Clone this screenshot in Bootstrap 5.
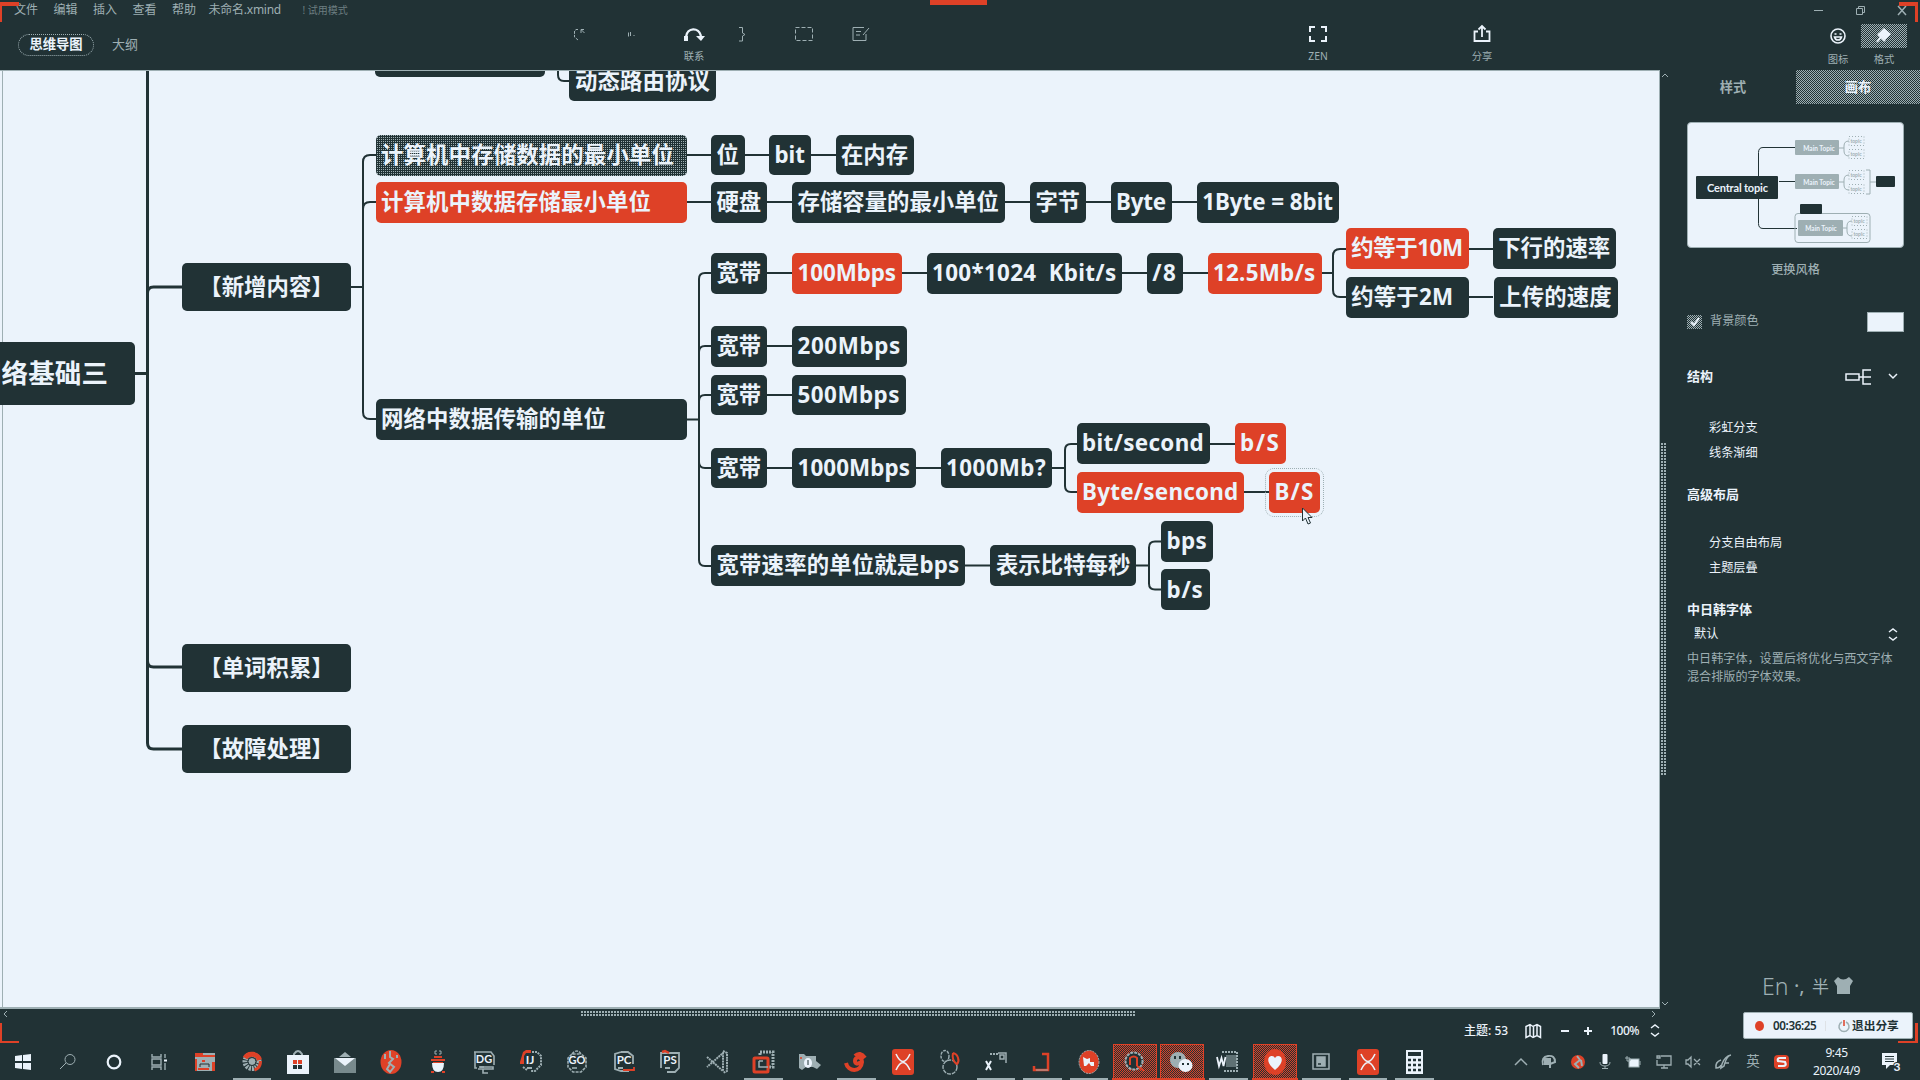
<!DOCTYPE html>
<html lang="zh-CN">
<head>
<meta charset="utf-8">
<title>未命名.xmind</title>
<link href="https://cdn.jsdelivr.net/npm/bootstrap@5.3.0/dist/css/bootstrap.min.css" rel="stylesheet">
<style>
:root{--ink:#213235;--paper:#ebf3fb;--mist:#9eafb3;--hot:#de4127}
body{width:1920px;height:1080px;background:var(--ink);color:var(--paper);font-family:"Noto Sans","Noto Sans CJK SC",sans-serif;font-size:12px;line-height:1}
svg{display:block;overflow:visible}
svg:not([fill]){fill:none}
svg:not([stroke]){stroke:currentColor}
.mist{color:var(--mist)}
.hot{color:var(--hot)}
.checker{background:repeating-conic-gradient(var(--mist) 0 25%,var(--ink) 0 50%) 0 0/2px 2px}
.checker-hot{background:repeating-conic-gradient(var(--hot) 0 25%,var(--ink) 0 50%) 0 0/2px 2px;border:1px solid var(--hot)}
.dots{background:linear-gradient(var(--ink) 1px,transparent 1px) 0 0/3px 3px,linear-gradient(90deg,var(--ink) 1px,transparent 1px) 0 0/3px 3px,var(--mist)}
.app-head{height:70px}
.menu-row{height:20px;padding-left:14px;padding-top:0}
.menu-list{gap:15.5px}
.doc-name{font-size:12px;margin-left:-3px;letter-spacing:-.25px}
.trial{font-size:10px;opacity:.6;margin-left:6px}
.win-btns{gap:33px;padding-right:14px}
.tool-row{height:50px;display:grid;grid-template-columns:18px 76px 18px 26px 418px 45px 62px 62px 36px 86px 28px 420px 46px 119px 44px 311px 46px 46px;justify-items:center;align-items:start}
.tool-row>*{white-space:nowrap}
.view-pill{width:76px;height:22px;margin-top:14px;border:1px dotted var(--mist);border-radius:11px;font-size:13.3px;font-weight:700}
.outline-link{font-size:13px;margin-top:18px}
.tool{display:flex;flex-direction:column;align-items:center;padding-top:5px;font-size:10.3px;color:var(--mist)}
.tool svg{height:18px;margin-bottom:8px}
.tool.right-tool{padding-top:4px}
.tool.right-tool .pic{width:46px;height:24px;display:flex;align-items:center;justify-content:center;margin-bottom:6px}
.right-tool svg{margin:0}
.work{height:973px}
.left-col{width:1660px}
.board{height:939px;background:var(--paper);border-top:1px solid var(--mist);border-right:1px solid var(--mist);border-bottom:2px solid var(--mist)}
.board .edge{left:2px;width:1px;top:0;bottom:0;background:var(--mist)}
.links{left:0;top:-1px;color:var(--ink);stroke-width:2}
.topic{position:absolute;background:var(--ink);color:var(--paper);border-radius:5px;font-weight:700;font-size:22.4px;white-space:nowrap;display:flex;align-items:center;padding-left:5.5px}
.topic.red{background:var(--hot)}
.topic.woven{background:conic-gradient(var(--mist) 0 25%,var(--ink) 0) 0 0/2px 2px}
.topic.main-t{justify-content:center;padding:0}
.topic.root{font-size:26.5px;padding-left:5px}
.topic.picked{outline:1px dotted var(--mist);outline-offset:3px}
.status{height:34px}
.status .thumb{width:555px;height:7px;margin-left:575px}
.status .info{padding-right:1px;font-size:12px;font-weight:500}
.side{width:260px}
.v-scroll{width:9px}
.v-scroll .thumb{height:334px;width:7px;border-radius:4px 4px 0 0}
.tabs{height:34px;margin-left:-9px}
.tabs>*{font-size:13.2px;font-weight:700;display:flex;align-items:center;justify-content:center;padding-top:2px}
.tabs .t-style{width:136px;padding-left:10px}
.tabs .t-canvas{width:124px}
.panel{width:217px;margin-left:18px}
.preview{margin-top:18px;height:126px;background:var(--paper);border-radius:4px;border:1px solid var(--mist)}
.preview text,.glyph{font-family:Lato,"Liberation Sans",sans-serif;font-weight:700;stroke:none;text-anchor:middle}
.line{display:flex;align-items:center;white-space:nowrap;font-size:12.2px;padding-top:1px}
.line.head{font-size:13px;font-weight:700}
.opt{height:25px;margin-left:-2px}
.ticked{width:15px;height:14px}
.swatch{width:37px;height:20px;background:var(--paper);border:1px solid var(--mist)}
.note{font-size:12.1px;line-height:18px}
.task{height:37px}
.task>.sys{width:45.5px}
.task>.app{width:46.5px}
.app,.sys{height:37px;display:flex;align-items:center;justify-content:center;flex:none}
.open::after{content:"";position:absolute;left:4px;right:4px;bottom:0;height:2px;background:var(--mist)}
.open,.lit{position:relative}
.lit .bg-tile{width:44px;height:35px;display:flex;align-items:center;justify-content:center}
.lit::after{content:"";position:absolute;left:0;right:0;bottom:0;height:2px;background:var(--hot)}
.tray{margin-left:77px;width:276px}
.clock{width:56px;margin-left:18px;gap:6px;font-size:12px;letter-spacing:-.4px;white-space:nowrap}
.recorder{left:1743px;top:1012px;width:170px;height:27px;background:var(--paper);color:var(--ink);border:1px solid var(--mist);font-size:11.7px;font-weight:600;border-radius:2px}
.ime{left:1762px;top:972px;height:28px}
.corner{width:19px;height:20px;border:0 solid var(--hot)}
</style>
<script src="https://cdn.jsdelivr.net/npm/bootstrap@5.3.0/dist/js/bootstrap.bundle.min.js"></script>
</head>
<body class="m-0 overflow-hidden position-relative">
<header class="app-head">
  <div class="menu-row d-flex align-items-center justify-content-between mist">
    <div class="menu-list d-flex align-items-center text-nowrap"><span>文件</span><span>编辑</span><span>插入</span><span>查看</span><span>帮助</span><span class="doc-name">未命名.xmind</span><span class="trial">! 试用模式</span></div>
    <div class="win-btns d-flex align-items-center">
      <svg width="9" height="9"><path d="M0 4.500H9"/></svg>
      <svg width="9" height="9"><path d="M.5 2.500h6v6h-6zM2.500 2V.5h6v6H7"/></svg>
      <svg width="8" height="9"><path d="M0 0l8 9M8 0L0 9" stroke-width="1.500"/></svg>
    </div>
  </div>
  <div class="tool-row">
    <i></i><div class="view-pill d-flex align-items-center justify-content-center">思维导图</div><i></i><div class="outline-link mist">大纲</div><i></i>
    <div class="tool"><svg width="12" viewBox="0 0 12 18"><path d="M5 4.500H3L1.500 6v6L5 15" stroke-dasharray="3 1"/><path d="M8 8V4.500h3M8.500 5l3 3"/></svg></div>
    <div class="tool"><svg width="12" viewBox="0 0 12 18"><path d="M2.500 7.500v4M4.500 7v4M7.500 10.500h1"/></svg></div>
    <div class="tool"><svg width="22" viewBox="0 0 22 18" color="#ebf3fb"><path d="M3 12C4 2 16 2 18 11" stroke-width="2.400"/><path d="M1 11h4v5H1zM13 11h9l-4 5z" fill="currentColor" stroke="none"/></svg><span>联系</span></div>
    <div class="tool"><svg width="8" viewBox="0 0 8 18"><path d="M0 2.500h3.500V8L6 9.500 3.500 11v5H0"/></svg></div>
    <div class="tool"><svg width="18" viewBox="0 0 18 18"><path d="M.5 2.500h17v13H.5z" stroke-dasharray="4 2"/></svg></div>
    <div class="tool"><svg width="18" viewBox="0 0 18 18"><path d="M12 2.500H1v13h13V9M17 3l-6 7M4 6.500h5M4 10h4"/></svg></div>
    <i></i>
    <div class="tool"><svg width="18" viewBox="0 0 18 18" color="#ebf3fb" stroke-width="2"><path d="M1 7V2h5M12 2h5v5M17 11v5h-5M6 16H1v-5"/></svg><span>ZEN</span></div>
    <i></i>
    <div class="tool"><svg width="18" viewBox="0 0 18 18" color="#ebf3fb" stroke-width="1.800"><path d="M5 6.500H1.500V16h15V6.500H13M9 12V1M5.500 4.500L9 1l3.500 3.500"/></svg><span>分享</span></div>
    <i></i>
    <div class="tool right-tool"><div class="pic"><svg width="16" height="16" style="height:16px" viewBox="0 0 16 16" color="#ebf3fb" stroke-width="1.600"><circle cx="8" cy="8" r="7"/><path d="M4.500 6h2M9.500 6h2M4.500 9h7c-1 4-6 4-7 0z"/></svg></div><span>图标</span></div>
    <div class="tool right-tool"><div class="pic checker"><svg width="16" style="height:16px" viewBox="0 0 16 16"><path d="M8 0l7 6-6 6-7-6z" fill="#ebf3fb" stroke="none"/><path d="M2 6l7 7M5 9l-4 5" stroke="#ebf3fb" stroke-width="2"/></svg></div><span>格式</span></div>
  </div>
</header>

<main class="work d-flex">
  <div class="left-col">
    <section class="board position-relative overflow-hidden" id="board">
      <div class="edge position-absolute"></div>
      <svg class="links position-absolute" width="1659" height="938" viewBox="0 70 1659 938">
        <g stroke-width="3"><path d="M147.500 70V743q0 6 6 6H183M135 373.500h12M147.500 661q0 6 6 6H183M147.500 293q0-6 6-6H183" /></g>
        <path d="M351 287h12M376 155h-6q-7 0-7 7V412q0 7 7 7h6M363 209q0-7 7-7h6M558 70v5q0 6 6 6h6"/>
        <path d="M686 155h150M686 202h511M686 419.500h12.500M712 273h-7q-6 0-6 6V560q0 6 6 6h7M699 352q0-6 6-6h7M699 401q0-6 6-6h7M699 462q0 6 6 6h7"/>
        <path d="M767 273h566M767 346h26M767 395h26M767 468h298M767 565.500h382M1346 249h-6q-7 0-7 7v34q0 7 7 7h6M1469 249h24M1469 297h24M1077 444h-6q-6 0-6 6v36q0 6 6 6h6M1210 444h25M1244 492h25M1161 541.500h-6q-6 0-6 6v36q0 6 6 6h6"/>
      </svg>
    </section>
    <div class="status d-flex flex-column">
      <div class="d-flex justify-content-between mist" style="padding:1px 4px 0 3px;height:9px">
        <svg width="5" height="7" style="margin-right:-3px"><path d="M4 1L1 4l3 3"/></svg><div class="thumb dots me-auto"></div><svg width="5" height="7"><path d="M1 1l3 3-3 3"/></svg>
      </div>
      <div class="info d-flex justify-content-end align-items-center flex-grow-1">
        <span style="margin-right:17px">主题: 53</span>
        <svg width="16" height="14" style="margin-right:20px" stroke-width="1.500"><path d="M5 1.500v10l-4 2v-11l4-2 3 2 4-2 3.500 2v11l-3.500-2-4 2-3-2M8.500 3v10M12 1v10"/></svg>
        <svg width="8" height="10" style="margin-right:15px" stroke-width="2"><path d="M0 5h8"/></svg>
        <svg width="8" height="10" style="margin-right:18px" stroke-width="2"><path d="M0 5h8M4 1v8"/></svg>
        <span style="margin-right:12px;letter-spacing:-.5px">100%</span>
        <svg width="8" height="13" stroke-width="1.500"><path d="M0 4l4-3 4 3M0 9l4 3 4-3"/></svg>
      </div>
    </div>
  </div>
  <aside class="side d-flex">
    <div class="v-scroll d-flex flex-column mist"><svg width="9" height="8"><path d="M2 7l3-3 3 3"/></svg><div class="thumb dots" style="margin-top:364px"></div><svg width="9" height="8" style="margin-top:224px"><path d="M2 2l3 3 3-3"/></svg></div>
    <div>
      <div class="tabs d-flex"><div class="t-style mist">样式</div><div class="t-canvas checker">画布</div></div>
      <div class="panel">
        <div class="preview">
          <svg width="215" height="124" viewBox="1 1 215 124">
            <g stroke="#213235"><path d="M108 25.500H76q-4.500 0-4.500 5v71q0 5 4.500 5h34M92 59.500h16"/></g>
            <g stroke="#9eafb3"><path d="M152 26h5M162 19q-5 0-5 5v5q0 5 5 5M152 60h5M162 53q-5 0-5 5v5q0 5 5 5M155 106h5M165 99q-5 0-5 5v5q0 5 5 5M179 48h4v24h-4M183 60h6"/><rect x="108" y="91.500" width="75" height="29" rx="3"/></g>
            <g fill="#9eafb3" stroke="none"><rect x="108" y="18" width="44" height="15" rx="1"/><rect x="108" y="52" width="44" height="15" rx="1"/><rect x="111" y="98" width="45" height="16" rx="1"/></g>
            <g fill="#213235" stroke="none"><rect x="9" y="54" width="82" height="23" rx="1"/><rect x="113" y="82" width="22" height="10" rx="1"/><rect x="189" y="54" width="19" height="11" rx="1"/></g>
            <g fill="#ebf3fb" font-size="6.500"><text x="132" y="28.500">Main Topic</text><text x="132" y="62.500">Main Topic</text><text x="134" y="108.500">Main Topic</text><text x="50.500" y="69.500" font-size="11" textLength="61">Central topic</text></g>
            <g fill="#9eafb3" font-size="5"><text x="169" y="21">topic</text><text x="169" y="34">topic</text><text x="169" y="55">topic</text><text x="169" y="69">topic</text><text x="172" y="101">topic</text><text x="172" y="114">topic</text></g>
            <g stroke="#9eafb3" stroke-dasharray="1 2"><rect x="162" y="14.500" width="15" height="9"/><rect x="162" y="27.500" width="15" height="9"/><rect x="162" y="48.500" width="15" height="9"/><rect x="162" y="62.500" width="15" height="9"/><rect x="165" y="94.500" width="15" height="9"/><rect x="165" y="107.500" width="15" height="9"/></g>
          </svg>
        </div>
        <div class="line justify-content-center mist" style="height:44px;font-weight:500">更换风格</div>
        <div class="line mist" style="height:20px;margin-top:19px"><div class="ticked checker me-2"><svg width="15" height="14"><path d="M4 7l3 3 5-7" stroke="#ebf3fb" stroke-width="2"/></svg></div>背景颜色<div class="swatch ms-auto"></div></div>
        <div class="line head" style="height:26px;margin-top:32px">结构
          <svg class="ms-auto" width="25" height="16" style="margin-right:18px" stroke-width="1.500"><path d="M0 5h13v6H0zM13 8h12M25 1h-8v14h8"/></svg><svg width="8" height="5" style="margin-right:7px" stroke-width="1.500"><path d="M0 0l4 4 4-4"/></svg></div>
        <div class="line opt ps-4" style="margin-top:26px">彩虹分支</div>
        <div class="line opt ps-4">线条渐细</div>
        <div class="line head" style="height:26px;margin-top:16px">高级布局</div>
        <div class="line opt ps-4" style="margin-top:23px">分支自由布局</div>
        <div class="line opt ps-4">主题层叠</div>
        <div class="line head" style="height:26px;margin-top:16px">中日韩字体</div>
        <div class="line" style="height:24px;padding-left:7px;padding-right:7px">默认<svg class="ms-auto" width="8" height="13" stroke-width="1.500"><path d="M0 4l4-3 4 3M0 9l4 3 4-3"/></svg></div>
        <div class="note mist" style="margin-top:4px">中日韩字体，设置后将优化与西文字体<br>混合排版的字体效果。</div>
      </div>
    </div>
  </aside>
</main>

<footer class="task d-flex align-items-center">
  <div class="sys"><svg width="16" height="16" stroke="none"><path fill="#ebf3fb" d="M0 2l7-1v6H0zM8 1l8-1v7H8zM0 9h7v6l-7-1zM8 9h8v7l-8-1z"/></svg></div>
  <div class="sys mist"><svg width="16" height="16"><circle cx="10" cy="5.500" r="5"/><path d="M6 9l-6 6"/></svg></div>
  <div class="sys"><svg width="14" height="14" stroke-width="2.200"><circle cx="7" cy="7" r="6.300"/></svg></div>
  <div class="sys mist"><svg width="16" height="16" stroke-width="1.400"><path d="M1 0v3h9V0M1 5h9v6H1zM1 16v-3h9v3M14 0v4M14 9v7"/><path d="M13 6.500h3" stroke="#ebf3fb" stroke-width="2"/></svg></div>
  <div class="app"><svg width="20" height="18" stroke="none"><path d="M0 0h20v18H0z" fill="#9eafb3"/><path d="M0 0h8v2h12v2H0zM0 6h2v12H0zM17 9h3v9h-3zM7 7h3v2H7zM3 15h11v2H3z" fill="#de4127"/><path d="M5 14v-3h9v3" stroke="#213235"/></svg></div>
  <div class="app open"><svg width="20" height="21"><circle cx="10" cy="10.500" r="7" stroke="#9eafb3" stroke-width="5" stroke-dasharray="2 1"/><path d="M3 7A8 8 0 0 1 17.500 9" stroke="#de4127" stroke-width="5"/><path d="M18.500 10q0 7-6 9" stroke="#de4127" stroke-width="3"/><circle cx="10" cy="10.500" r="4" fill="#9eafb3" stroke="#213235"/></svg></div>
  <div class="app"><svg width="22" height="24"><path d="M7 7V4q4-6 8 0v3" stroke="#9eafb3" stroke-width="2"/><path fill="#ebf3fb" stroke="none" d="M0 5h22v19H0z"/><path fill="#de4127" stroke="none" d="M6 10h4v4H6zM11 10h4v4h-4z"/><path fill="#213235" stroke="none" d="M6 15h4v4H6zM11 15h4v4h-4z"/></svg></div>
  <div class="app"><svg width="22" height="22"><path d="M5 6l6-5 6 5" fill="#9eafb3" stroke="none"/><path fill="#9eafb3" stroke="none" d="M0 7h22v15H0z" opacity=".7"/><path d="M1 7h20l-10 8z" fill="#ebf3fb" stroke="none"/></svg></div>
  <div class="app"><svg width="22" height="24"><ellipse cx="11" cy="12" rx="10.500" ry="12" fill="#de4127" stroke="none"/><path d="M10 1v6l3 2-4 4 5 4-4 5-3-3 3-5M5 4v5M17 5v3" stroke="#9eafb3" stroke-width="2"/></svg></div>
  <div class="app"><svg width="16" height="24"><path d="M7 1H5v3h2M9 1h2v3H9" stroke="#9eafb3"/><path d="M4 7h8M1 10h14M3 13h10M1 22h3M12 22h3" stroke="#de4127" stroke-width="2"/><path d="M2 13h12q0 9-6 9t-6-9" fill="#ebf3fb" stroke="none"/></svg></div>
  <div class="app"><svg width="22" height="24" stroke="#9eafb3" stroke-width="1.600"><path d="M4 18H2V2h16l3 4v9M7 17h13v2H10v4h5M1 2h5M5 19h5"/><path class="sm" d="M6 17h5"/><text class="glyph" x="11" y="13" font-size="11" fill="#ebf3fb">DG</text></svg></div>
  <div class="app"><svg width="22" height="24" stroke="#9eafb3" stroke-width="2" ><path d="M12 2h5l4 4v9l-6 6h-4M3 17l4 3" stroke-dasharray="2 1"/><path d="M0 12l3-10 3-2h5v3H6L4 6v8H0z" fill="#de4127" stroke="none"/><path d="M7 18h5"/><text class="glyph" x="10" y="14" font-size="12" fill="#ebf3fb">IJ</text></svg></div>
  <div class="app"><svg width="22" height="24" stroke="#9eafb3" stroke-width="1.600"><path d="M6 4q5-6 9 0l5 4v9l-5 5H7l-5-5V8l4-4h9" stroke-dasharray="3 1"/><path d="M6 18h5"/><text class="glyph" x="11" y="14" font-size="11" fill="#ebf3fb">GO</text></svg></div>
  <div class="app"><svg width="22" height="24" stroke="#9eafb3" stroke-width="1.800"><path d="M8 2L2 4v15l6 2h8M8 2h7l5 4v8M5 18h5"/><path d="M10 20h11v-3" stroke="#de4127"/><text class="glyph" x="11" y="14" font-size="11.500" fill="#ebf3fb">PC</text></svg></div>
  <div class="app"><svg width="22" height="24" stroke="#9eafb3" stroke-width="1.800"><path d="M2 18V3h18v15l-4 4H8M6 18h5"/><path d="M3 2l3-1 4 2" stroke="#de4127" stroke-width="2.500"/><text class="glyph" x="11" y="14" font-size="11.500" fill="#ebf3fb">PS</text></svg></div>
  <div class="app"><svg width="22" height="24" stroke="#9eafb3" stroke-width="2" stroke-dasharray="2 .7"><path d="M1 7l16 14V3L1 17M17 1l4 2v18l-4 2"/></svg></div>
  <div class="app open"><svg width="23" height="24" stroke-width="3"><path d="M8 5V2h13v15h-4" stroke="#9eafb3" stroke-dasharray="2 1"/><rect x="2" y="8" width="14" height="14" rx="1" stroke="#de4127"/><path d="M7 11v6h9M7 11h4" stroke="#9eafb3" stroke-width="1.500"/></svg></div>
  <div class="app"><svg width="22" height="16" stroke="none"><path d="M0 0h5l2 2h10v5l5 4-4 4-4-2H7l-4 3-3-2z" fill="#9eafb3"/><ellipse cx="9" cy="9" rx="4" ry="5" fill="#ebf3fb"/><circle cx="2" cy="4" r="1" fill="#de4127"/><path d="M9 6v5" stroke="#213235"/></svg></div>
  <div class="app open"><svg width="22" height="22" stroke="#de4127" stroke-width="4"><path d="M1 12c2 9 15 10 16-1 0-6-7-6-7-1 0 4 5 3 4 0M10 5q5-5 10 2"/></svg></div>
  <div class="app"><svg width="22" height="26"><rect width="22" height="26" rx="3" fill="#de4127" stroke="none"/><path d="M4 5q7 15 14 0M4 21q7-15 14 0" stroke-width="1.600"/></svg></div>
  <div class="app"><svg width="21" height="24" stroke="#9eafb3" stroke-width="1.400"><circle cx="11" cy="17" r="7" stroke-dasharray="4 1"/><ellipse cx="6" cy="6" rx="4" ry="5.500" stroke-dasharray="3 1"/><path d="M14 3c5 1 7 8 4 11-4-2-5-7-4-11" stroke="#de4127" stroke-width="2"/></svg></div>
  <div class="app open"><svg width="22" height="22" stroke="#9eafb3"><path d="M5 3h9" stroke-width="2" stroke-dasharray="2 1"/><path d="M13 2h8v10M15 4h4v4h-4z" stroke-width="1.500"/><path d="M1 10l5 9M6 10l-5 9" stroke="#ebf3fb" stroke-width="2"/></svg></div>
  <div class="app open"><svg width="16" height="20" stroke="#de4127" stroke-width="2.500"><path d="M8 2h6v16H0v-4"/><path d="M2 18h12" stroke="#9eafb3" stroke-width="1"/></svg></div>
  <div class="app open"><svg width="22" height="24"><ellipse cx="11" cy="12" rx="10" ry="11.500" fill="#de4127" stroke="#9eafb3" stroke-dasharray="2 1"/><path d="M5 7l4 2 3-1v4h4v4h-3l-2-3-3 3H6z" fill="#ebf3fb" stroke="none"/></svg></div>
  <div class="app lit"><div class="bg-tile checker-hot"><svg width="22" height="22"><circle cx="10" cy="10" r="8.500" fill="#213235" stroke="#9eafb3" stroke-width="2" stroke-dasharray="3 1"/><path d="M6 14V7q4-3 7 0v8M13 15l7 5" stroke="#de4127" stroke-width="2"/></svg></div></div>
  <div class="app lit"><div class="bg-tile checker-hot"><svg width="23" height="20" stroke="none"><ellipse cx="8" cy="8" rx="8" ry="8" fill="#9eafb3"/><ellipse cx="15.500" cy="13.500" rx="7" ry="6.500" fill="#ebf3fb"/><path d="M4 4h2v3H4zM9 4h2v3H9zM12 11h2v2h-2zM17 11h2v2h-2z" fill="#213235"/></svg></div></div>
  <div class="app open"><svg width="22" height="22"><path d="M5 1h15v19H6" stroke="#9eafb3" stroke-width="2" stroke-dasharray="2 1"/><rect x="9" y="4" width="11" height="12" fill="#9eafb3" opacity=".5" stroke="none"/><path d="M0 6l2 9 2.500-8 2 8 2-9" stroke-width="1.800"/></svg></div>
  <div class="app lit"><div class="bg-tile checker-hot"><svg width="22" height="26"><ellipse cx="11" cy="13" rx="11" ry="13" fill="#de4127" stroke="none"/><path d="M11 21C2 14 3 7 8 7q2 0 3 2 1-2 3-2c5 0 6 7-3 14z" fill="#ebf3fb" stroke="none"/></svg></div></div>
  <div class="app open"><svg width="18" height="17" stroke="#9eafb3" stroke-width="1.500"><path d="M1 1h16v15H1z"/><path d="M5 4h8v9H5z" fill="#9eafb3"/><path d="M6 11h3" stroke="#213235"/></svg></div>
  <div class="app open"><svg width="22" height="26"><rect width="22" height="26" rx="3" fill="#de4127" stroke="none"/><path d="M4 5q7 15 14 0M4 21q7-15 14 0" stroke-width="1.600"/></svg></div>
  <div class="app open"><svg width="17" height="24" stroke="none"><path d="M0 0h17v24H0z" fill="#ebf3fb"/><path d="M2 2h13v4H2z" fill="#213235"/><path d="M2 10h13M2 15h13M2 20h13" stroke="#213235" stroke-width="2.500" stroke-dasharray="3 2"/></svg></div>
  <div class="tray d-flex align-items-center justify-content-between mist">
    <svg width="12" height="7" stroke-width="1.500"><path d="M0 7l6-6 6 6"/></svg>
    <svg width="15" height="15" stroke-width="2"><path d="M2 11Q0 3 7 2t7 6l-5 2v4"/><path d="M4 5h5v5H4z" fill="currentColor"/></svg>
    <svg width="14" height="14"><circle cx="7" cy="7" r="7" fill="#de4127" stroke="none"/><path d="M6 1l3 4-5 4 4 4M10 5l1 6" stroke-width="2"/></svg>
    <svg width="10" height="15"><rect x="2.500" width="5" height="10" rx="1" fill="#ebf3fb" stroke="none"/><path d="M0 8q0 4 5 4t5-4M5 12v3M2 14.500h6"/></svg>
    <svg width="16" height="12"><rect x="4" y="3" width="10" height="8" fill="#ebf3fb"/><path d="M15 5v4M0 2h5v3H2V0" /></svg>
    <svg width="16" height="14" stroke-width="1.300"><path d="M5 1h10v9H1V5M5 13h7M8 10v3M1 1h3v2H1z"/></svg>
    <svg width="14" height="10" stroke-width="1.300"><path d="M0 3h2l3-3v10L2 7H0zM8 2l6 6M14 2L8 8"/></svg>
    <svg width="16" height="14" stroke-width="1.500"><path d="M16 0q-6 1-9 9l-1 4 3-2q2-8 5-10M6 5q-6 2-5 8 4 0 5-3M10 8l4 0"/></svg>
    <span style="font-size:13.500px">英</span>
    <svg width="16" height="16"><rect width="15" height="14" y="1" rx="4" fill="#de4127" stroke="none"/><path d="M12 4H6q-3 0-2 3l7 1q2 4-2 4H4" stroke="#ebf3fb" stroke-width="2.200"/></svg>
  </div>
  <div class="clock d-flex flex-column align-items-center"><span>9:45</span><span>2020/4/9</span></div>
  <svg width="19" height="18" style="margin-left:17px"><path d="M0 0h15v12H8l-4 4v-4H0z" fill="#ebf3fb" stroke="none"/><path d="M3 3.500h9M3 6h9M3 8.500h9" stroke="#213235"/><text class="glyph" x="15" y="18" font-size="12" fill="#ebf3fb" style="paint-order:stroke;stroke:#213235;stroke-width:2">3</text></svg>
</footer>

<div class="ime position-absolute d-flex align-items-center mist"><span style="font-size:23px;font-weight:300;width:32px">En</span><span style="font-size:20px;width:18px;white-space:nowrap">·,</span><span style="font-size:17px;width:22px">半</span><svg width="19" height="18"><path d="M4 0q5 5 11 0l4 4-3 5v8H3V9L0 4z" fill="currentColor" stroke="none"/></svg></div>
<div class="recorder position-absolute d-flex align-items-center"><svg width="9" height="10" style="margin-left:11px"><ellipse cx="4.500" cy="5" rx="4.500" ry="5" fill="#de4127" stroke="none"/></svg><span style="margin-left:9px;width:52px;letter-spacing:-.4px">00:36:25</span><span class="border-start" style="height:10px;width:13px"></span><svg class="mist" width="12" height="12" stroke-width="1.500"><path d="M4 2a5 5 0 1 0 4 0"/><path d="M6 0v6" stroke="#de4127"/></svg><span style="margin-left:2px">退出分享</span></div>
<div class="corner position-absolute" style="left:0;top:2px;border-width:4px 0 0 2px"></div>
<div class="corner position-absolute" style="left:1899px;top:2px;border-width:4px 3px 0 0"></div>
<div class="corner position-absolute" style="left:0;top:1023px;border-width:0 0 2px 2px"></div>
<div class="corner position-absolute" style="left:1898px;top:1023px;border-width:0 3px 2px 0;width:20px"></div>
<div class="position-absolute" style="left:930px;top:0;width:57px;height:5px;background:var(--hot)"></div>
<svg class="position-absolute" style="left:1302px;top:508px" width="12" height="18" stroke="#213235"><path fill="#ebf3fb" d="M.5 0v13l3-3 2.500 6 2.500-1L6 9.500h4z"/></svg>

<script>
// Topics: text, left, top, right, bottom, variant, text width
const topics = [
  ['', 375, 40, 545, 77],
  ['动态路由协议', 569.4, 61, 716, 101, '', 135],
  ['网络基础三', -30, 342, 135, 404.7, 'root', 133],
  ['【新增内容】', 182, 262.7, 351, 311.3, 'main-t'],
  ['【单词积累】', 182, 644, 351, 692, 'main-t'],
  ['【故障处理】', 182, 725, 351, 773, 'main-t'],
  ['计算机中存储数据的最小单位', 375.5, 134.5, 686.5, 175.5, 'woven', 293],
  ['计算机中数据存储最小单位', 375.5, 181.5, 686.5, 222.5, 'red', 270],
  ['网络中数据传输的单位', 375.5, 398.7, 686.5, 439.7, '', 225],
  ['位', 711, 134.5, 744.5, 175], ['bit', 769, 134.5, 811, 175], ['在内存', 835.5, 134.5, 914, 175],
  ['硬盘', 711, 181.5, 767, 222.5], ['存储容量的最小单位', 792, 181.5, 1005, 222.5], ['字节', 1030, 181.5, 1085.5, 222.5],
  ['Byte', 1110.5, 181.5, 1172, 222.5], ['1Byte = 8bit', 1196.7, 181.5, 1339, 222.5],
  ['宽带', 711, 252.5, 767, 293.5], ['100Mbps', 792, 252.5, 902, 293.5, 'red'], ['100*1024\u00a0 Kbit/s', 926.6, 252.5, 1122.5, 293.5],
  ['/8', 1146.7, 252.5, 1183.3, 293.5], ['12.5Mb/s', 1207.5, 252.5, 1321.5, 293.5, 'red'],
  ['约等于10M', 1345.7, 228, 1468.7, 269.3, 'red'], ['下行的速率', 1492.7, 228, 1616.3, 269.3],
  ['约等于2M', 1345.7, 276.7, 1469.5, 318, '', 102], ['上传的速度', 1493.7, 276.7, 1617.7, 318],
  ['宽带', 711, 325.7, 767, 366.7], ['200Mbps', 792, 325.7, 907, 366.7],
  ['宽带', 711, 374.7, 767, 415.3], ['500Mbps', 792, 374.7, 906, 415.3],
  ['宽带', 711, 447.5, 767, 488.3], ['1000Mbps', 792, 447.5, 916, 488.3], ['1000Mb?', 940.5, 447.5, 1052, 488.3],
  ['bit/second', 1076.6, 423, 1210, 464.3], ['b/S', 1234.6, 423, 1286.4, 464.3, 'red'],
  ['Byte/sencond', 1076.6, 471.7, 1244.5, 513, 'red'], ['B/S', 1269, 471.7, 1320.4, 513, 'red picked'],
  ['宽带速率的单位就是bps', 711, 544.8, 965.4, 586], ['表示比特每秒', 990.4, 544.8, 1136.4, 586],
  ['bps', 1161, 520.8, 1213, 562], ['b/s', 1161, 569.3, 1209.6, 610.3]
];
const board = document.getElementById('board');
for (const [text, l, t, r, b, kind = '', width] of topics) {
  const el = document.createElement('div');
  el.className = 'topic ' + kind;
  el.style.cssText = `left:${l}px;top:${t - 71}px;width:${r - l}px;height:${b - t}px`;
  const s = document.createElement('span');
  s.textContent = text;
  el.append(s);
  board.append(el);
  // Spread the letters so each label fills its topic box
  if (text && kind !== 'main-t') {
    const want = width || (r - l - 11.5);
    s.style.letterSpacing = (want - s.getBoundingClientRect().width) / text.length + 'px';
  }
}
</script>
</body>
</html>
